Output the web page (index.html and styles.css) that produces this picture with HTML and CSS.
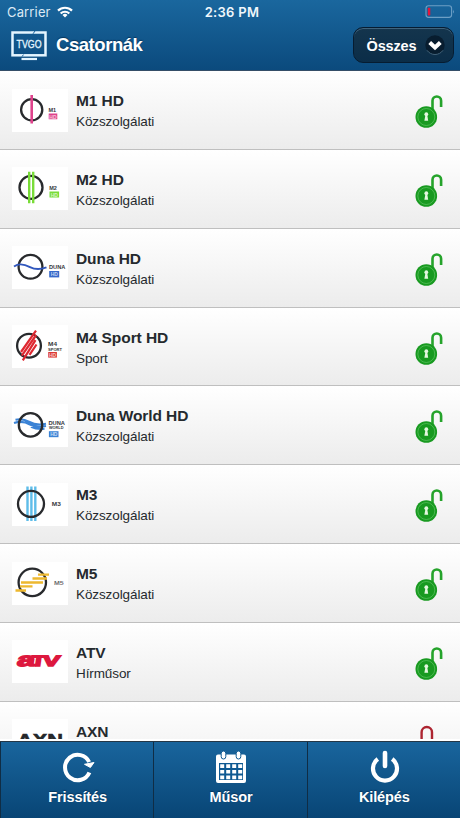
FILE: index.html
```html
<!DOCTYPE html>
<html lang="hu">
<head>
<meta charset="utf-8">
<title>Csatornák</title>
<link rel="stylesheet" href="styles.css">
</head>
<body>
<svg width="0" height="0" class="defs">
  <symbol id="unlock" viewBox="0 0 30 36">
    <path d="M18.500 18V7.800a4.200 4.200 0 0 1 8.600 0V14" fill="none" stroke="#25a32b" stroke-width="2.600"/>
    <circle cx="12.300" cy="24" r="10.800" fill="#189a20"/>
    <circle cx="12.300" cy="24" r="8.500" fill="none" stroke="#5fc463" stroke-width=".7"/>
    <circle cx="12.300" cy="21.200" r="1.900" fill="#e4f7df"/>
    <path d="M11.400 22h1.800l1 5.700h-3.800z" fill="#e4f7df"/>
  </symbol>
</svg>
<div class="app">
  <header class="header">
    <div class="status">
      <div class="carrier">Carrier
        <svg width="16" height="12" viewBox="0 0 16 12" fill="none" stroke="#fff" stroke-width="2.200"><path d="M1 4.600a10 10 0 0 1 14 0M3.700 7.500a6.200 6.200 0 0 1 8.600 0"/><path d="M8 11.500 5.500 9a3.700 3.700 0 0 1 5 0z" fill="#fff" stroke="none"/></svg>
      </div>
      <div class="clock">2:36 PM</div>
      <svg class="battery" width="30" height="14" viewBox="0 0 30 14"><rect x="1" y=".8" width="25.600" height="11.600" rx="2.600" fill="none" stroke="#6d9fc5" stroke-width="1.100"/><path d="M28 4.500q1.600 2 0 4z" fill="#6d9fc5"/><rect x="2.800" y="2.800" width="2.500" height="7.800" rx=".8" fill="#e5163c"/></svg>
    </div>
    <div class="titlebar">
      <svg class="tv" width="36" height="30" viewBox="0 0 36 30"><rect x="1.500" y="1.500" width="33" height="22.800" fill="none" stroke="#e4f5ff" stroke-width="2.500"/><path d="M10.500 28h15.500" stroke="#e4f5ff" stroke-width="2.200"/><path d="m22 2.800 2-2.800M11 25.600l1.500-2" stroke="#17609a"/><text x="5.500" y="16.500" font-size="10" textLength="25" lengthAdjust="spacingAndGlyphs" fill="#e4f5ff" stroke="#e4f5ff" stroke-width=".3">TVGO</text></svg>
      <h1>Csatornák</h1>
      <button class="filter"><span>Összes</span><svg width="22" height="22" viewBox="0 0 22 22"><circle cx="11" cy="11" r="9.700" fill="#081d2f"/><path d="M3 16.300a9.700 9.700 0 0 0 16 0" fill="none" stroke="#42637a" stroke-width="1"/><path d="m5.700 8.500 5.300 5 5.300-5" fill="none" stroke="#fff" stroke-width="4"/></svg></button>
    </div>
  </header>
  <main class="list">
    <div class="row">
      <svg class="logo" viewBox="0 0 56 43"><circle class="ring" cx="19.700" cy="20.800" r="10.600"/><path d="M19.700 6v28.500" stroke="#df438c" stroke-width="2.600"/><text x="36.500" y="23" font-size="5.500">M1</text><path d="M36.700 24.500h8.600v5.800h-8.600z" fill="#df438c"/><text class="hd" x="37.300" y="29.500">HD</text></svg>
      <div class="info"><h2>M1 HD</h2><p>Közszolgálati</p></div><svg class="lock"><use href="#unlock"/></svg>
    </div>
    <div class="row">
      <svg class="logo" viewBox="0 0 56 43"><circle class="ring" cx="19" cy="20.400" r="11.500"/><path d="M17.200 4.800v31.400M21.200 4.800v31.400" stroke="#79dc38" stroke-width="2.400"/><text x="37.200" y="22.800" font-size="5.500">M2</text><path d="M37.500 24.500h9.600v6h-9.600z" fill="#79dc38"/><text class="hd" x="38.700" y="29.600">HD</text></svg>
      <div class="info"><h2>M2 HD</h2><p>Közszolgálati</p></div><svg class="lock"><use href="#unlock"/></svg>
    </div>
    <div class="row">
      <svg class="logo" viewBox="0 0 56 43"><circle class="ring" cx="18.500" cy="20.800" r="11.900"/><path d="M2 20.500c5-3.500 12-1.500 16 .6s10 2.700 16.500.3" fill="none" stroke="#3157bd" stroke-width="1.900"/><text x="37" y="23.300" font-size="5.600" textLength="16.300" lengthAdjust="spacingAndGlyphs">DUNA</text><path d="M37.200 25h10v6.400h-10z" fill="#3668ca"/><text class="hd" x="38.700" y="30.200">HD</text></svg>
      <div class="info"><h2>Duna HD</h2><p>Közszolgálati</p></div><svg class="lock"><use href="#unlock"/></svg>
    </div>
    <div class="row">
      <svg class="logo" viewBox="0 0 56 43"><circle class="ring" cx="17" cy="20.700" r="11.900"/><path d="M24 5.700 9 27M24.200 10 9.800 30.700M23.500 15.200 10.800 35.300M24.500 19.500l-7 10.300" stroke="#de2831" stroke-width="2.200"/><text x="36" y="21" font-size="5.600" textLength="9" lengthAdjust="spacingAndGlyphs">M4</text><text x="36" y="25.700" font-size="4.300" textLength="14" lengthAdjust="spacingAndGlyphs">SPORT</text><path d="M36.200 27h8.700v5.600h-8.700z" fill="#dc3934"/><text class="hd" x="37" y="31.700">HD</text></svg>
      <div class="info"><h2>M4 Sport HD</h2><p>Sport</p></div><svg class="lock"><use href="#unlock"/></svg>
    </div>
    <div class="row">
      <svg class="logo" viewBox="0 0 56 43"><path d="M3.500 15.700c6-1.200 10 0 14 2.300s10 3 16.500 1.800M2 19c6-2 12-.8 16 1.500s9 3 16 1.500M19 22.800c5 2.500 9 2.500 13.500 2" fill="none" stroke="#3b83d6" stroke-width="2.100"/><circle class="ring" cx="18.500" cy="20.900" r="11.700"/><text x="36.500" y="20.500" font-size="5.600" textLength="16.500" lengthAdjust="spacingAndGlyphs">DUNA</text><text x="37" y="25" font-size="4.200" textLength="14.500" lengthAdjust="spacingAndGlyphs">WORLD</text><path d="M36.900 27.200h9.600v6h-9.600z" fill="#3b83d6"/><text class="hd" x="38.200" y="32.200">HD</text></svg>
      <div class="info"><h2>Duna World HD</h2><p>Közszolgálati</p></div><svg class="lock"><use href="#unlock"/></svg>
    </div>
    <div class="row">
      <svg class="logo" viewBox="0 0 56 43"><path d="M15.500 3.500V38M19.400 3.500V38M23.300 3.500V38" stroke="#5fbde9" stroke-width="2.400"/><circle class="ring" cx="19" cy="20.900" r="13"/><text x="39.800" y="23.200" font-size="5.800" textLength="9" lengthAdjust="spacingAndGlyphs">M3</text></svg>
      <div class="info"><h2>M3</h2><p>Közszolgálati</p></div><svg class="lock"><use href="#unlock"/></svg>
    </div>
    <div class="row">
      <svg class="logo" viewBox="0 0 56 43"><circle class="ring" cx="20.300" cy="20.400" r="13.700"/><path d="M26 12.700h11M20.500 16.500H35M9 20.500h22M8 24.400h12.500M3.500 28.500H14" stroke="#edb82f" stroke-width="2.300"/><text x="42" y="22.900" font-size="5.800" textLength="9.800" lengthAdjust="spacingAndGlyphs" fill-opacity=".75">M5</text></svg>
      <div class="info"><h2>M5</h2><p>Közszolgálati</p></div><svg class="lock"><use href="#unlock"/></svg>
    </div>
    <div class="row">
      <svg class="logo" viewBox="0 0 56 43"><g class="atv"><text x="4.500" y="25.800" font-size="19" textLength="18" lengthAdjust="spacingAndGlyphs">a</text><text x="19" y="25.800" font-size="15" textLength="14" lengthAdjust="spacingAndGlyphs">T</text><text x="30.500" y="25.800" font-size="15" textLength="17" lengthAdjust="spacingAndGlyphs">V</text></g></svg>
      <div class="info"><h2>ATV</h2><p>Hírműsor</p></div><svg class="lock"><use href="#unlock"/></svg>
    </div>
    <div class="row">
      <svg class="logo" viewBox="0 0 56 43"><text class="axn" x="5" y="26.500" font-size="16" textLength="46" lengthAdjust="spacingAndGlyphs">AXN</text></svg>
      <div class="info"><h2>AXN</h2></div>
      <svg class="lock" viewBox="0 0 30 36"><path d="M7.600 16V8.200a5.200 5.200 0 0 1 10.400 0V16M7 16.500h11.500" fill="none" stroke="#ad2430" stroke-width="2.400"/></svg>
    </div>
  </main>
  <nav class="tabs">
    <a class="tab"><svg width="34" height="34" viewBox="0 0 34 34"><path d="M28.200 12A12.700 12.700 0 1 0 28.400 22.500" fill="none" stroke="#fff" stroke-width="4"/><path d="m23.500 14.300 9.500-1.800-3.600 5z" fill="#fff" stroke="#fff"/></svg><span>Frissítés</span></a>
    <a class="tab"><svg width="34" height="34" viewBox="0 0 34 34"><path d="M4 4.500h26a2 2 0 0 1 2 2V31a2 2 0 0 1-2 2H4a2 2 0 0 1-2-2V6.500a2 2 0 0 1 2-2z" fill="#fff"/><path d="M5 13h24v17H5z" fill="#0f5992"/><path d="M6.200 14.300h4v3.700h-4zm6 0h4v3.700h-4zm6 0h4v3.700h-4zm6 0h4v3.700h-4zm-18 5.600h4v3.700h-4zm6 0h4v3.700h-4zm6 0h4v3.700h-4zm6 0h4v3.700h-4zm-18 5.600h4v3.700h-4zm6 0h4v3.700h-4zm6 0h4v3.700h-4zm6 0h4v3.700h-4z" fill="#fff"/><rect x="7.200" y="1" width="4.600" height="8" rx="2.300" fill="#fff" stroke="#0f5992" stroke-width="1"/><rect x="22.200" y="1" width="4.600" height="8" rx="2.300" fill="#fff" stroke="#0f5992" stroke-width="1"/></svg><span>Műsor</span></a>
    <a class="tab"><svg width="34" height="34" viewBox="0 0 34 34"><path d="M10.800 9a12 12 0 1 0 14.400 0" fill="none" stroke="#fff" stroke-width="4.200"/><path d="M18 3v13" stroke="#fff" stroke-width="4.600" stroke-linecap="round"/></svg><span>Kilépés</span></a>
  </nav>
</div>
</body>
</html>
```
FILE: styles.css
```css
* { box-sizing: border-box; }
body { margin: 0; font-family: "Liberation Sans", Arial, sans-serif; color: #252a2e; }
h1, h2, p { margin: 0; }
.defs { display: block; }
.app { width: 460px; height: 818px; display: flex; flex-direction: column; overflow: hidden; background: #fff; }

.header { height: 71px; flex: none; color: #fff; background: linear-gradient(#1a679e, #0b4a7d); border-bottom: 1px solid #354e68; }
.status { height: 25px; display: grid; grid-template-columns: 1fr auto 1fr; align-items: center; padding: 0 5px 0 7px; font: 13px Inter, sans-serif; }
.carrier { display: flex; align-items: center; gap: 6px; color: #dceaf5; letter-spacing: .15px; margin-top: -1px; }
.clock { font-weight: 600; letter-spacing: .3px; color: #f0f7fc; padding-left: 2px; margin-top: -1px; }
.battery { justify-self: end; margin-top: -1px; }
.titlebar { display: flex; align-items: center; height: 40px; padding: 0 6px 0 11px; }
.tv { flex: none; margin-top: 2px; }
h1 { font-size: 18.500px; letter-spacing: -.45px; margin-left: 9px; line-height: 22px; text-shadow: 0 -1px 1px #08365d; }
.filter { margin-left: auto; width: 101px; height: 36px; padding: 0 7px 0 12.500px; display: flex; align-items: center; justify-content: space-between; border: 1.500px solid #061c31; border-radius: 10px; background: linear-gradient(#14354d, #0b2d48); box-shadow: inset 0 1px 0 #40637c; color: #fff; font: bold 14.500px "Liberation Sans", sans-serif; letter-spacing: -.15px; margin-top: 0; }
.filter span { margin-top: 2px; }

.list { flex: none; height: 668px; overflow: hidden; }
.row { height: 78.850px; display: flex; padding: 0 17px 0 12px; background: linear-gradient(#fff, #ececec); border-bottom: 1px solid #bfbfbf; }
.logo { width: 56px; height: 43px; margin-top: 17.500px; background: #fff; flex: none; font-weight: bold; }
.ring { fill: none; stroke: #282a2d; stroke-width: 2.300; }
.logo text { fill: #35373b; }
.logo .hd { fill: #fff; fill-opacity: .7; font-size: 5px; }
.logo .atv text { fill: #dd183e; stroke: #dd183e; stroke-width: 1.500; }
.logo .atv { transform: skewX(-8deg); transform-origin: 25px 25px; }
.logo .axn { fill: #25272a; stroke: #25272a; stroke-width: .6; }
.info { flex: 1; padding: 20px 0 0 8px; }
h2 { font-size: 15.500px; line-height: 19px; letter-spacing: -.08px; }
p { font-size: 13.500px; line-height: 18px; margin-top: 3px; letter-spacing: -.1px; }
.lock { width: 30px; height: 36px; margin-top: 22px; margin-right: -1px; flex: none; }

.tabs { margin-top: 2px; height: 77px; flex: none; display: grid; grid-template-columns: repeat(3, 1fr); border-top: 1px solid #243746; background: linear-gradient(#19659d, #084575); }
.tab { display: flex; flex-direction: column; align-items: center; padding-top: 8px; border-left: 1px solid #102d45; color: #fff; font-size: 14.500px; font-weight: bold; line-height: 18px; text-shadow: 0 -1px 1px #08365d; letter-spacing: -.1px; padding-left: 1px; }
.tab span { margin-top: 4px; }
```
